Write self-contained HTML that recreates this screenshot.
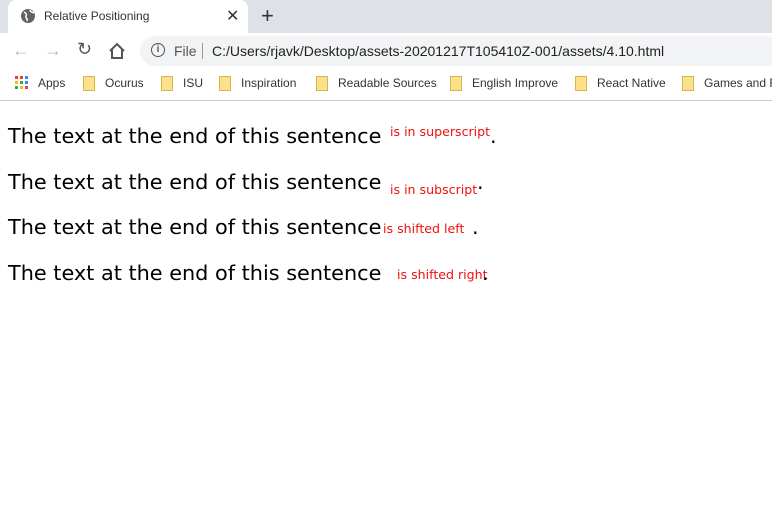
<!DOCTYPE html>
<html><head><style>
body{margin:0;width:772px;height:512px;overflow:hidden;background:#fff;font-family:"Liberation Sans",sans-serif;position:relative}
.abs{position:absolute;white-space:nowrap}
.m{font-family:"DejaVu Sans",sans-serif;font-size:20.8px;color:#000;line-height:1}
.r{font-family:"DejaVu Sans",sans-serif;font-size:12.6px;color:#f01010;line-height:1}
</style></head><body>
<div class="abs" style="left:0;top:0;width:772px;height:33px;background:#dee1e6"></div>
<div class="abs" style="left:8px;top:0;width:240px;height:33px;background:#fff;border-radius:8px 8px 0 0"></div>
<svg class="abs" style="left:20px;top:8px" width="16" height="16" viewBox="0 0 16 16"><circle cx="8" cy="8" r="7" fill="#5f6368"/><path d="M4 4c2 1 3 2 2 4s2 2 1 5M10 2c0 2 2 2 4 3" stroke="#fff" stroke-width="1.5" fill="none"/></svg>
<div class="abs" style="left:44px;top:9px;font-size:12px;color:#333">Relative Positioning</div>
<div class="abs" style="left:226px;top:6px;font-size:16px;color:#333">✕</div>
<div class="abs" style="left:261px;top:3px;font-size:22px;color:#333">+</div>
<div class="abs" style="left:0;top:33px;width:772px;height:36px;background:#fff"></div>
<div class="abs" style="left:12px;top:40px;font-size:18px;color:#bbb">←</div>
<div class="abs" style="left:44px;top:40px;font-size:18px;color:#bbb">→</div>
<div class="abs" style="left:77px;top:39px;font-size:18px;color:#555">↻</div>
<svg class="abs" style="left:108px;top:42px" width="18" height="18" viewBox="0 0 18 18"><path d="M2 9 9 2l7 7M4 7v9h10V7" stroke="#555" stroke-width="2" fill="none"/></svg>
<div class="abs" style="left:140px;top:36px;width:640px;height:30px;border-radius:15px;background:#f1f3f4"></div>
<div class="abs" style="left:151px;top:43px;width:12px;height:12px;border:1.5px solid #555;border-radius:50%;font-size:10px;text-align:center;line-height:12px;color:#555;font-weight:bold">i</div>
<div class="abs" style="left:174px;top:43px;font-size:14px;color:#555">File</div>
<div class="abs" style="left:202px;top:43px;width:1px;height:16px;background:#999"></div>
<div class="abs" style="left:212px;top:43px;font-size:14px;color:#222">C:/Users/rjavk/Desktop/assets-20201217T105410Z-001/assets/4.10.html</div>
<div class="abs" style="left:0;top:69px;width:772px;height:31px;background:#fff;border-bottom:1px solid #ccc"></div>
<svg class="abs" style="left:15px;top:76px" width="13" height="13"><g><rect x="0" y="0" width="3" height="3" fill="#ea4335"/><rect x="5" y="0" width="3" height="3" fill="#ea4335"/><rect x="10" y="0" width="3" height="3" fill="#4285f4"/><rect x="0" y="5" width="3" height="3" fill="#fbbc05"/><rect x="5" y="5" width="3" height="3" fill="#34a853"/><rect x="10" y="5" width="3" height="3" fill="#4285f4"/><rect x="0" y="10" width="3" height="3" fill="#34a853"/><rect x="5" y="10" width="3" height="3" fill="#fbbc05"/><rect x="10" y="10" width="3" height="3" fill="#ea4335"/></g></svg>
<div class="abs" style="left:38px;top:76px;font-size:12px;color:#333">Apps</div>
<div class="abs" style="left:83px;top:76px;width:10px;height:13px;background:#fce18a;border:1px solid #d9b64a"></div><div class="abs" style="left:105px;top:76px;font-size:12px;color:#333">Ocurus</div>
<div class="abs" style="left:161px;top:76px;width:10px;height:13px;background:#fce18a;border:1px solid #d9b64a"></div><div class="abs" style="left:183px;top:76px;font-size:12px;color:#333">ISU</div>
<div class="abs" style="left:219px;top:76px;width:10px;height:13px;background:#fce18a;border:1px solid #d9b64a"></div><div class="abs" style="left:241px;top:76px;font-size:12px;color:#333">Inspiration</div>
<div class="abs" style="left:316px;top:76px;width:10px;height:13px;background:#fce18a;border:1px solid #d9b64a"></div><div class="abs" style="left:338px;top:76px;font-size:12px;color:#333">Readable Sources</div>
<div class="abs" style="left:450px;top:76px;width:10px;height:13px;background:#fce18a;border:1px solid #d9b64a"></div><div class="abs" style="left:472px;top:76px;font-size:12px;color:#333">English Improve</div>
<div class="abs" style="left:575px;top:76px;width:10px;height:13px;background:#fce18a;border:1px solid #d9b64a"></div><div class="abs" style="left:597px;top:76px;font-size:12px;color:#333">React Native</div>
<div class="abs" style="left:682px;top:76px;width:10px;height:13px;background:#fce18a;border:1px solid #d9b64a"></div><div class="abs" style="left:704px;top:76px;font-size:12px;color:#333">Games and F</div>

<div class="abs m" style="left:8px;top:126px">The text at the end of this sentence</div>
<div class="abs r" style="left:390px;top:126px">is in superscript</div>
<div class="abs m" style="left:490px;top:126px">.</div>

<div class="abs m" style="left:8px;top:172px">The text at the end of this sentence</div>
<div class="abs r" style="left:390px;top:184px">is in subscript</div>
<div class="abs m" style="left:477px;top:172px">.</div>

<div class="abs m" style="left:8px;top:217px">The text at the end of this sentence</div>
<div class="abs r" style="left:383px;top:223px">is shifted left</div>
<div class="abs m" style="left:472px;top:217px">.</div>

<div class="abs m" style="left:8px;top:263px">The text at the end of this sentence</div>
<div class="abs r" style="left:397px;top:269px">is shifted right</div>
<div class="abs m" style="left:482px;top:263px">.</div>
</body></html>
